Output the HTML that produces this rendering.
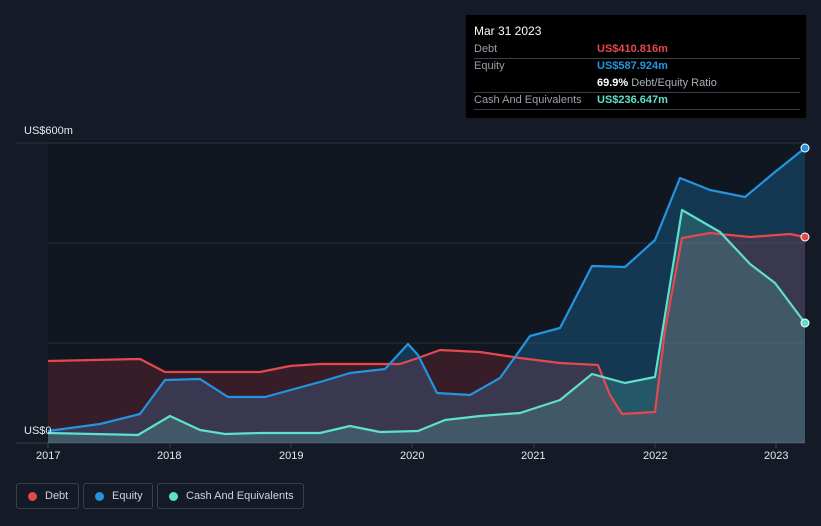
<!DOCTYPE html><html><head><style>
html,body{margin:0;width:821px;height:526px;overflow:hidden}
body{background:#151b26;font-family:"Liberation Sans",sans-serif;position:relative}
.tt{position:absolute;left:466px;top:15px;width:340px;height:103px;background:#000;color:#fff;font-size:11px}
.tt .r{position:absolute;left:8px;right:6px;border-bottom:1px solid #3a3f47;height:17px}
.tt .l{position:absolute;left:0;top:2px;color:#9aa0a8}
.tt .v{position:absolute;left:123px;top:2px;font-weight:bold;white-space:nowrap}
.leg{position:absolute;top:483px;height:26px;border:1px solid #3a404a;border-radius:3px;color:#d0d4da;font-size:11px;line-height:26px;box-sizing:border-box;white-space:nowrap}
.leg i{position:absolute;left:11px;top:8px;width:9px;height:9px;border-radius:50%}
.leg span{position:absolute;left:28px;top:-1px}
.ax{position:absolute;color:#e6e8eb;font-size:11px;top:450px}
</style></head><body>
<svg width="821" height="526" style="position:absolute;left:0;top:0">
<rect x="48" y="140" width="757" height="303" fill="#111720"/>
<line x1="16" y1="143" x2="805" y2="143" stroke="#2e343d"/>
<line x1="48" y1="243" x2="805" y2="243" stroke="#262c35"/>
<line x1="48" y1="343" x2="805" y2="343" stroke="#262c35"/>
<line x1="16" y1="443" x2="805" y2="443" stroke="#3a404a"/>
<g>
<polygon fill="rgba(33,150,230,0.25)" points="48,443 48,431 100,424 140,414 165,380 200,379 228,397 265,397 320,382 350,373 385,369 408,344 418,355 437,393 470,395 500,378 530,336 560,328 592,266 625,267 655,240 680,178 710,190 745,197 775,172 805,148 805,443"/>
<polygon fill="rgba(230,60,70,0.18)" points="48,443 48,361 140,359 165,372 260,372 290,366 320,364 400,364 418,358 440,350 480,352 520,358 560,363 598,365 610,395 622,414 655,412 665,330 682,238 710,233 750,237 790,234 805,237 805,443"/>
<polygon fill="rgba(100,220,200,0.2)" points="48,443 48,433 138,435 170,416 200,430 225,434 260,433 320,433 350,426 380,432 418,431 445,420 480,416 520,413 560,400 592,374 625,383 655,377 682,210 720,232 750,264 775,283 805,323 805,443"/>
<polyline fill="none" stroke="#e5484d" stroke-width="2.2" stroke-linejoin="round" points="48,361 140,359 165,372 260,372 290,366 320,364 400,364 418,358 440,350 480,352 520,358 560,363 598,365 610,395 622,414 655,412 665,330 682,238 710,233 750,237 790,234 805,237"/>
<polyline fill="none" stroke="#2394e0" stroke-width="2.2" stroke-linejoin="round" points="48,431 100,424 140,414 165,380 200,379 228,397 265,397 320,382 350,373 385,369 408,344 418,355 437,393 470,395 500,378 530,336 560,328 592,266 625,267 655,240 680,178 710,190 745,197 775,172 805,148"/>
<polyline fill="none" stroke="#5ee0cc" stroke-width="2.2" stroke-linejoin="round" points="48,433 138,435 170,416 200,430 225,434 260,433 320,433 350,426 380,432 418,431 445,420 480,416 520,413 560,400 592,374 625,383 655,377 682,210 720,232 750,264 775,283 805,323"/>
<circle cx="805" cy="148" r="4" fill="#2394e0" stroke="#fff" stroke-width="1"/>
<circle cx="805" cy="237" r="4" fill="#e5484d" stroke="#fff" stroke-width="1"/>
<circle cx="805" cy="323" r="4" fill="#5ee0cc" stroke="#fff" stroke-width="1"/>
</g>
<g stroke="#3a404a"><line x1="48" y1="443" x2="48" y2="448"/><line x1="170" y1="443" x2="170" y2="448"/><line x1="291" y1="443" x2="291" y2="448"/><line x1="412" y1="443" x2="412" y2="448"/><line x1="534" y1="443" x2="534" y2="448"/><line x1="655" y1="443" x2="655" y2="448"/><line x1="776" y1="443" x2="776" y2="448"/></g>
</svg>
<div style="position:absolute;left:24px;top:125px;color:#e6e8eb;font-size:11px">US$600m</div>
<div style="position:absolute;left:24px;top:425px;color:#e6e8eb;font-size:11px">US$0</div>
<div class="ax" style="left:36px">2017</div><div class="ax" style="left:157px">2018</div><div class="ax" style="left:279px">2019</div><div class="ax" style="left:400px">2020</div><div class="ax" style="left:521px">2021</div><div class="ax" style="left:643px">2022</div><div class="ax" style="left:764px">2023</div>
<div class="tt">
<div style="position:absolute;left:8px;top:9px;font-size:12px">Mar 31 2023</div>
<div class="r" style="top:26px"><span class="l">Debt</span><span class="v" style="color:#e5484d">US$410.816m</span></div>
<div class="r" style="top:43px;border:none"><span class="l">Equity</span><span class="v" style="color:#2394e0">US$587.924m</span></div>
<div class="r" style="top:60px"><span class="v" style="color:#fff">69.9% <span style="font-weight:normal;color:#aab0b8">Debt/Equity Ratio</span></span></div>
<div class="r" style="top:77px"><span class="l">Cash And Equivalents</span><span class="v" style="color:#5ee0cc">US$236.647m</span></div>
</div>
<div class="leg" style="left:16px;width:63px"><i style="background:#e5484d"></i><span>Debt</span></div>
<div class="leg" style="left:83px;width:70px"><i style="background:#2394e0"></i><span>Equity</span></div>
<div class="leg" style="left:157px;width:147px"><i style="background:#5ee0cc"></i><span>Cash And Equivalents</span></div>
</body></html>
